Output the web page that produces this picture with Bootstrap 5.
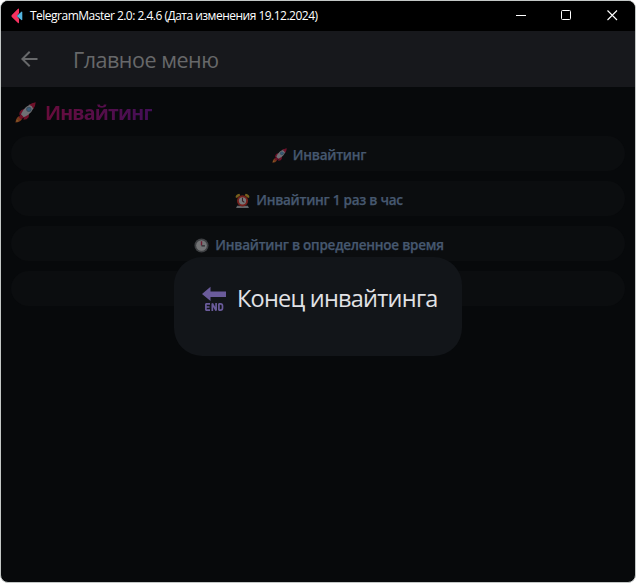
<!DOCTYPE html>
<html lang="ru">
<head>
<meta charset="utf-8">
<meta name="viewport" content="width=device-width, initial-scale=1">
<title>TelegramMaster 2.0</title>
<link href="https://cdn.jsdelivr.net/npm/bootstrap@5.3.0/dist/css/bootstrap.min.css" rel="stylesheet">
<style>
body{background:#fff;font-family:"Open Sans","Noto Sans",sans-serif}
.app-window{border:1px solid #c3c7c6;border-radius:8px;background:#07090b}
.title-strip{height:30px;background:#000;color:#fff;font-size:12px;padding-left:10px}
.title-strip .caption{margin-left:7px;letter-spacing:-.51px}
.win-btn{width:46px;height:30px}
.app-bar{height:56px;background:#17181c;color:#67686a;padding-left:16px}
.app-bar .heading{font-size:21.500px;margin-left:32px;letter-spacing:-.48px;padding-top:3px}
.page-body{padding:10px 10px 0 10px}
.section-head{height:29px;font-size:19.500px;font-weight:700;padding:5px 0 0 4px;line-height:24px}
.section-head .label{margin-left:9px;margin-top:-1px;letter-spacing:-.8px;background:linear-gradient(90deg,#680c3b,#430f57);-webkit-background-clip:text;background-clip:text;color:transparent}
.pill-list{row-gap:10px;margin-top:10px}
.pill{height:35px;border-radius:18px;background:#0b0d0f;color:#46586f;border:0;font-size:13.500px;font-weight:600;line-height:20px;padding:3px 0 0 2px}
.pill .label{margin-left:6px;letter-spacing:-.24px;-webkit-text-stroke:.25px #46586f}
.dialog-box{left:173px;top:256px;width:288px;height:99px;border-radius:28px;background:#121519;color:#e1e2e6;font-size:23.500px;padding:24px 0 0 27px;line-height:35px}
.dialog-box .label{margin-left:10px;letter-spacing:-.76px}
.label,.caption,.heading{white-space:nowrap}
</style>
<script src="https://cdn.jsdelivr.net/npm/bootstrap@5.3.0/dist/js/bootstrap.bundle.min.js"></script>
</head>
<body class="vh-100 overflow-hidden">
<svg class="d-none">
<symbol id="rocket" viewBox="0 0 20 20">
<path d="M6 7.500 9 6.600 7 11 4 12.400Q3.800 9 6 7.500zM9 13.500 13.500 11 13 14.500Q11.500 17 8 17z" fill="#6e1029"/>
<path d="M3.500 13.500Q1 15 .4 19.600 5 19.300 6.600 16.500z" fill="#78371c"/>
<path d="M1.700 16.500 1.200 18.900 3.600 18.300z" fill="#826229"/>
<path d="M5.500 12Q9 3 19 1 17.500 11 8 14.800z" fill="#6f7075"/>
<path d="M13.500 2.700Q16 1 19.700.3 19.500 4 17.500 6.700 16.500 3.500 13.500 2.700z" fill="#6e1029"/>
<path d="M5.500 11.500 3.700 14.300 6 16.500 8.600 14.800z" fill="#6e1029"/>
<circle cx="13.200" cy="7" r="2.500" fill="#3c4d59"/><circle cx="13.200" cy="7" r="1.600" fill="#345a78"/>
</symbol>
<symbol id="alarm" viewBox="0 0 14 14">
<path d="M.5 4Q.6 1 4 .6L5 2 1.700 4.700zM13.500 4Q13.400 1 10 .6L9 2 12.300 4.700z" fill="#77601d"/>
<path d="M2 12h10l1 2H1z" fill="#626467"/>
<circle cx="7" cy="7.300" r="5.200" fill="#76201c"/><circle cx="7" cy="7.300" r="3.400" fill="#77787a"/>
<path d="M7 4.500v3l1.700 1.300" fill="none" stroke="#3a2026" stroke-width="1"/>
</symbol>
<symbol id="clock" viewBox="0 0 14 14">
<circle cx="7" cy="7" r="6.600" fill="#3f4144"/><circle cx="7" cy="7" r="5" fill="#737476"/>
<path d="M7 3v4" stroke="#6e1d32" stroke-width="1.300"/><path d="M7 7.300h3.200" stroke="#282b2e" stroke-width="1.200"/>
</symbol>
</svg>
<main class="app-window position-relative h-100 overflow-hidden">
<header class="title-strip d-flex align-items-center">
<svg width="12" height="16" viewBox="0 0 12 16"><path d="M.8 7 7 .7Q8 .2 8 1.500V5L6 8l2 3v3.200Q8 15.800 7 15.100L.8 9Q0 8 .8 7z" fill="#f5315f"/><path d="m6.200 7.400 4.200-3.700Q11.300 3.300 11.300 4.300v7.200Q11.300 12.500 10.400 12L6.200 8.600Q5.500 8 6.200 7.400z" fill="#53b4df"/></svg>
<span class="caption">TelegramMaster 2.0: 2.4.6 (Дата изменения 19.12.2024)</span>
<div class="d-flex ms-auto">
<svg class="win-btn" viewBox="0 0 46 30"><path d="M19 14.500h10" stroke="#fff"/></svg>
<svg class="win-btn" viewBox="0 0 46 30"><rect x="18.500" y="9.500" width="9" height="9" rx="1" fill="none" stroke="#fff"/></svg>
<svg class="win-btn" viewBox="0 0 46 30"><path d="m18.500 9.500 9.500 9.500M28 9.500 18.500 19" stroke="#fff" stroke-width="1.100"/></svg>
</div>
</header>
<nav class="app-bar d-flex align-items-center">
<svg width="24" height="24" viewBox="0 0 24 24"><path d="M20.500 11H7.830l5.590-5.590L12 4l-8 8 8 8 1.410-1.410L7.830 13H20.500z" fill="#67686a"/></svg>
<span class="heading">Главное меню</span>
</nav>
<section class="page-body">
<div class="section-head d-flex align-items-start"><svg width="21" height="21"><use href="#rocket"/></svg><span class="label">Инвайтинг</span></div>
<div class="pill-list d-grid">
<button class="pill d-flex align-items-center justify-content-center"><svg width="15" height="15"><use href="#rocket"/></svg><span class="label">Инвайтинг</span></button>
<button class="pill d-flex align-items-center justify-content-center"><svg width="15" height="15"><use href="#alarm"/></svg><span class="label">Инвайтинг 1 раз в час</span></button>
<button class="pill d-flex align-items-center justify-content-center"><svg width="15" height="15"><use href="#clock"/></svg><span class="label">Инвайтинг в определенное время</span></button>
<button class="pill"></button>
</div>
</section>
<div class="dialog-box position-absolute d-flex align-items-start" role="dialog">
<svg width="26" height="36" viewBox="0 0 26 36"><path d="M1 13 9.500 5.800V10.500H25v5.500H9.500V20z" fill="#6a5b9b"/><g fill="none" stroke="#6a5b9b" stroke-width="1.700" stroke-linejoin="bevel"><path d="M9 22.900H4.900v6.200H9M4.900 26H8.500M11.300 30v-7.500l3.800 7V22M17.900 22.900h1.600Q21.500 22.900 21.500 25v2Q21.500 29.100 19.500 29.100H17.900z"/></g></svg>
<span class="label">Конец инвайтинга</span>
</div>
</main>
</body>
</html>
